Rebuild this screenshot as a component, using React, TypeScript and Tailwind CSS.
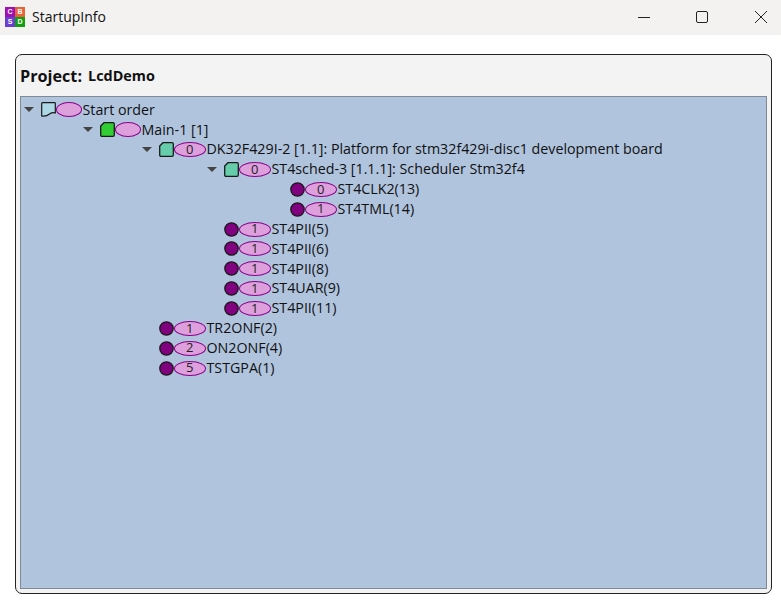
import React from 'react';

type Kind = 'book' | 'main' | 'sched' | 'leaf';

type Row = {
  kind: Kind;
  indent: string;
  order?: number;
  label: string;
  open?: boolean;
};

const rows: Row[] = [
  { kind: 'book', indent: 'pl-[3px]', label: 'Start order', open: true },
  { kind: 'main', indent: 'pl-[62px]', label: 'Main-1 [1]', open: true },
  { kind: 'sched', indent: 'pl-[121px]', order: 0, label: 'DK32F429I-2 [1.1]: Platform for stm32f429i-disc1 development board', open: true },
  { kind: 'sched', indent: 'pl-[186px]', order: 0, label: 'ST4sched-3 [1.1.1]: Scheduler Stm32f4', open: true },
  { kind: 'leaf', indent: 'pl-[269px]', order: 0, label: 'ST4CLK2(13)' },
  { kind: 'leaf', indent: 'pl-[269px]', order: 1, label: 'ST4TML(14)' },
  { kind: 'leaf', indent: 'pl-[203px]', order: 1, label: 'ST4PII(5)' },
  { kind: 'leaf', indent: 'pl-[203px]', order: 1, label: 'ST4PII(6)' },
  { kind: 'leaf', indent: 'pl-[203px]', order: 1, label: 'ST4PII(8)' },
  { kind: 'leaf', indent: 'pl-[203px]', order: 1, label: 'ST4UAR(9)' },
  { kind: 'leaf', indent: 'pl-[203px]', order: 1, label: 'ST4PII(11)' },
  { kind: 'leaf', indent: 'pl-[138px]', order: 1, label: 'TR2ONF(2)' },
  { kind: 'leaf', indent: 'pl-[138px]', order: 2, label: 'ON2ONF(4)' },
  { kind: 'leaf', indent: 'pl-[138px]', order: 5, label: 'TSTGPA(1)' },
];

const Logo = () => (
  <div className="grid grid-cols-2 w-[20px] h-[20px] text-white text-[7px] leading-[10px] font-bold text-center font-['Liberation_Sans',sans-serif]">
    <span className="bg-[#a010b0]">C</span>
    <span className="bg-[#e8623a]">B</span>
    <span className="bg-[#6a3ed0]">S</span>
    <span className="bg-[#12a012]">D</span>
  </div>
);

const NodeIcon = ({ kind }: { kind: Kind }) => {
  if (kind === 'leaf') {
    return (
      <svg width="15" height="15" viewBox="0 0 15 15" className="shrink-0">
        <circle cx="7.5" cy="7.5" r="6.7" fill="#800080" stroke="#1a1a1a" strokeWidth="1.3" />
      </svg>
    );
  }
  if (kind === 'book') {
    return (
      <svg width="15" height="15" viewBox="0 0 15 15" className="shrink-0">
        <path d="M1.4 .7 H13.6 Q14.3 .7 14.3 1.4 V11 Q11.5 10 8.5 12 Q5 14.8 .7 14 V1.4 Q.7 .7 1.4 .7 Z" fill="#add8e6" stroke="#1a1a1a" strokeWidth="1.2" />
      </svg>
    );
  }
  return (
    <svg width="15" height="15" viewBox="0 0 15 15" className="shrink-0">
      <path d="M4 .7 H13 Q14.3 .7 14.3 2 V13 Q14.3 14.3 13 14.3 H2 Q.7 14.3 .7 13 V4 Z" fill={kind === 'main' ? '#32cd32' : '#66cdaa'} stroke="#1a1a1a" strokeWidth="1.3" />
    </svg>
  );
};

const Oval = ({ value }: { value?: number }) => (
  <span className={`flex h-[15px] shrink-0 items-center justify-center rounded-[50%] border-[1.5px] border-[#8b008b] bg-[#dda0dd] text-[13px] text-[#222] ${value === undefined ? 'w-[25.5px]' : 'w-[31.5px]'}`}>
    {value}
  </span>
);

const TreeRow = ({ row }: { row: Row }) => (
  <div className={`flex h-[19.87px] items-center ${row.indent}`}>
    {row.open && (
      <span className="mr-[7px] h-0 w-0 border-x-[5px] border-t-[5px] border-x-transparent border-t-[#444] shrink-0" />
    )}
    <NodeIcon kind={row.kind} />
    <Oval value={row.order} />
    <span className="ml-px -mt-[1px] whitespace-nowrap">{row.label}</span>
  </div>
);

export default function App() {
  return (
    <div className="w-[781px] h-[605px] bg-white overflow-hidden font-['Open_Sans',sans-serif] text-[14.25px] text-[#111]">
      <header className="flex h-[35px] items-center bg-[#f3f2f0] pb-[2px]">
        <div className="ml-[5px]"><Logo /></div>
        <span className="ml-[7px] text-[14px]">StartupInfo</span>
        <div className="ml-auto flex items-center">
          <svg width="14" height="14" viewBox="0 0 14 14" className="mr-[44px]"><path d="M1 7.5 H13" stroke="#222" strokeWidth="1" /></svg>
          <svg width="14" height="14" viewBox="0 0 14 14" className="mr-[45px]"><rect x="1.5" y="1.5" width="11" height="11" rx="1.5" fill="none" stroke="#222" strokeWidth="1" /></svg>
          <svg width="14" height="14" viewBox="0 0 14 14" className="mr-[13px]"><path d="M1 1 L13 13 M13 1 L1 13" stroke="#222" strokeWidth="1" /></svg>
        </div>
      </header>
      <main className="ml-[15px] mr-[9px] mt-[19px] flex h-[540px] flex-col rounded-[7px] border border-[#222] bg-[#f3f3f3] px-[4px] pb-[4px]">
        <div className="flex h-[41px] items-center gap-[6px] pt-[1px] font-bold">
          <span className="text-[16.2px]">Project:</span>
          <span className="text-[14.4px]">LcdDemo</span>
        </div>
        <div className="flex-1 border border-[#808a96] bg-[#b0c4de] pt-[3px]">
          {rows.map((row) => (
            <TreeRow key={row.label} row={row} />
          ))}
        </div>
      </main>
    </div>
  );
}
